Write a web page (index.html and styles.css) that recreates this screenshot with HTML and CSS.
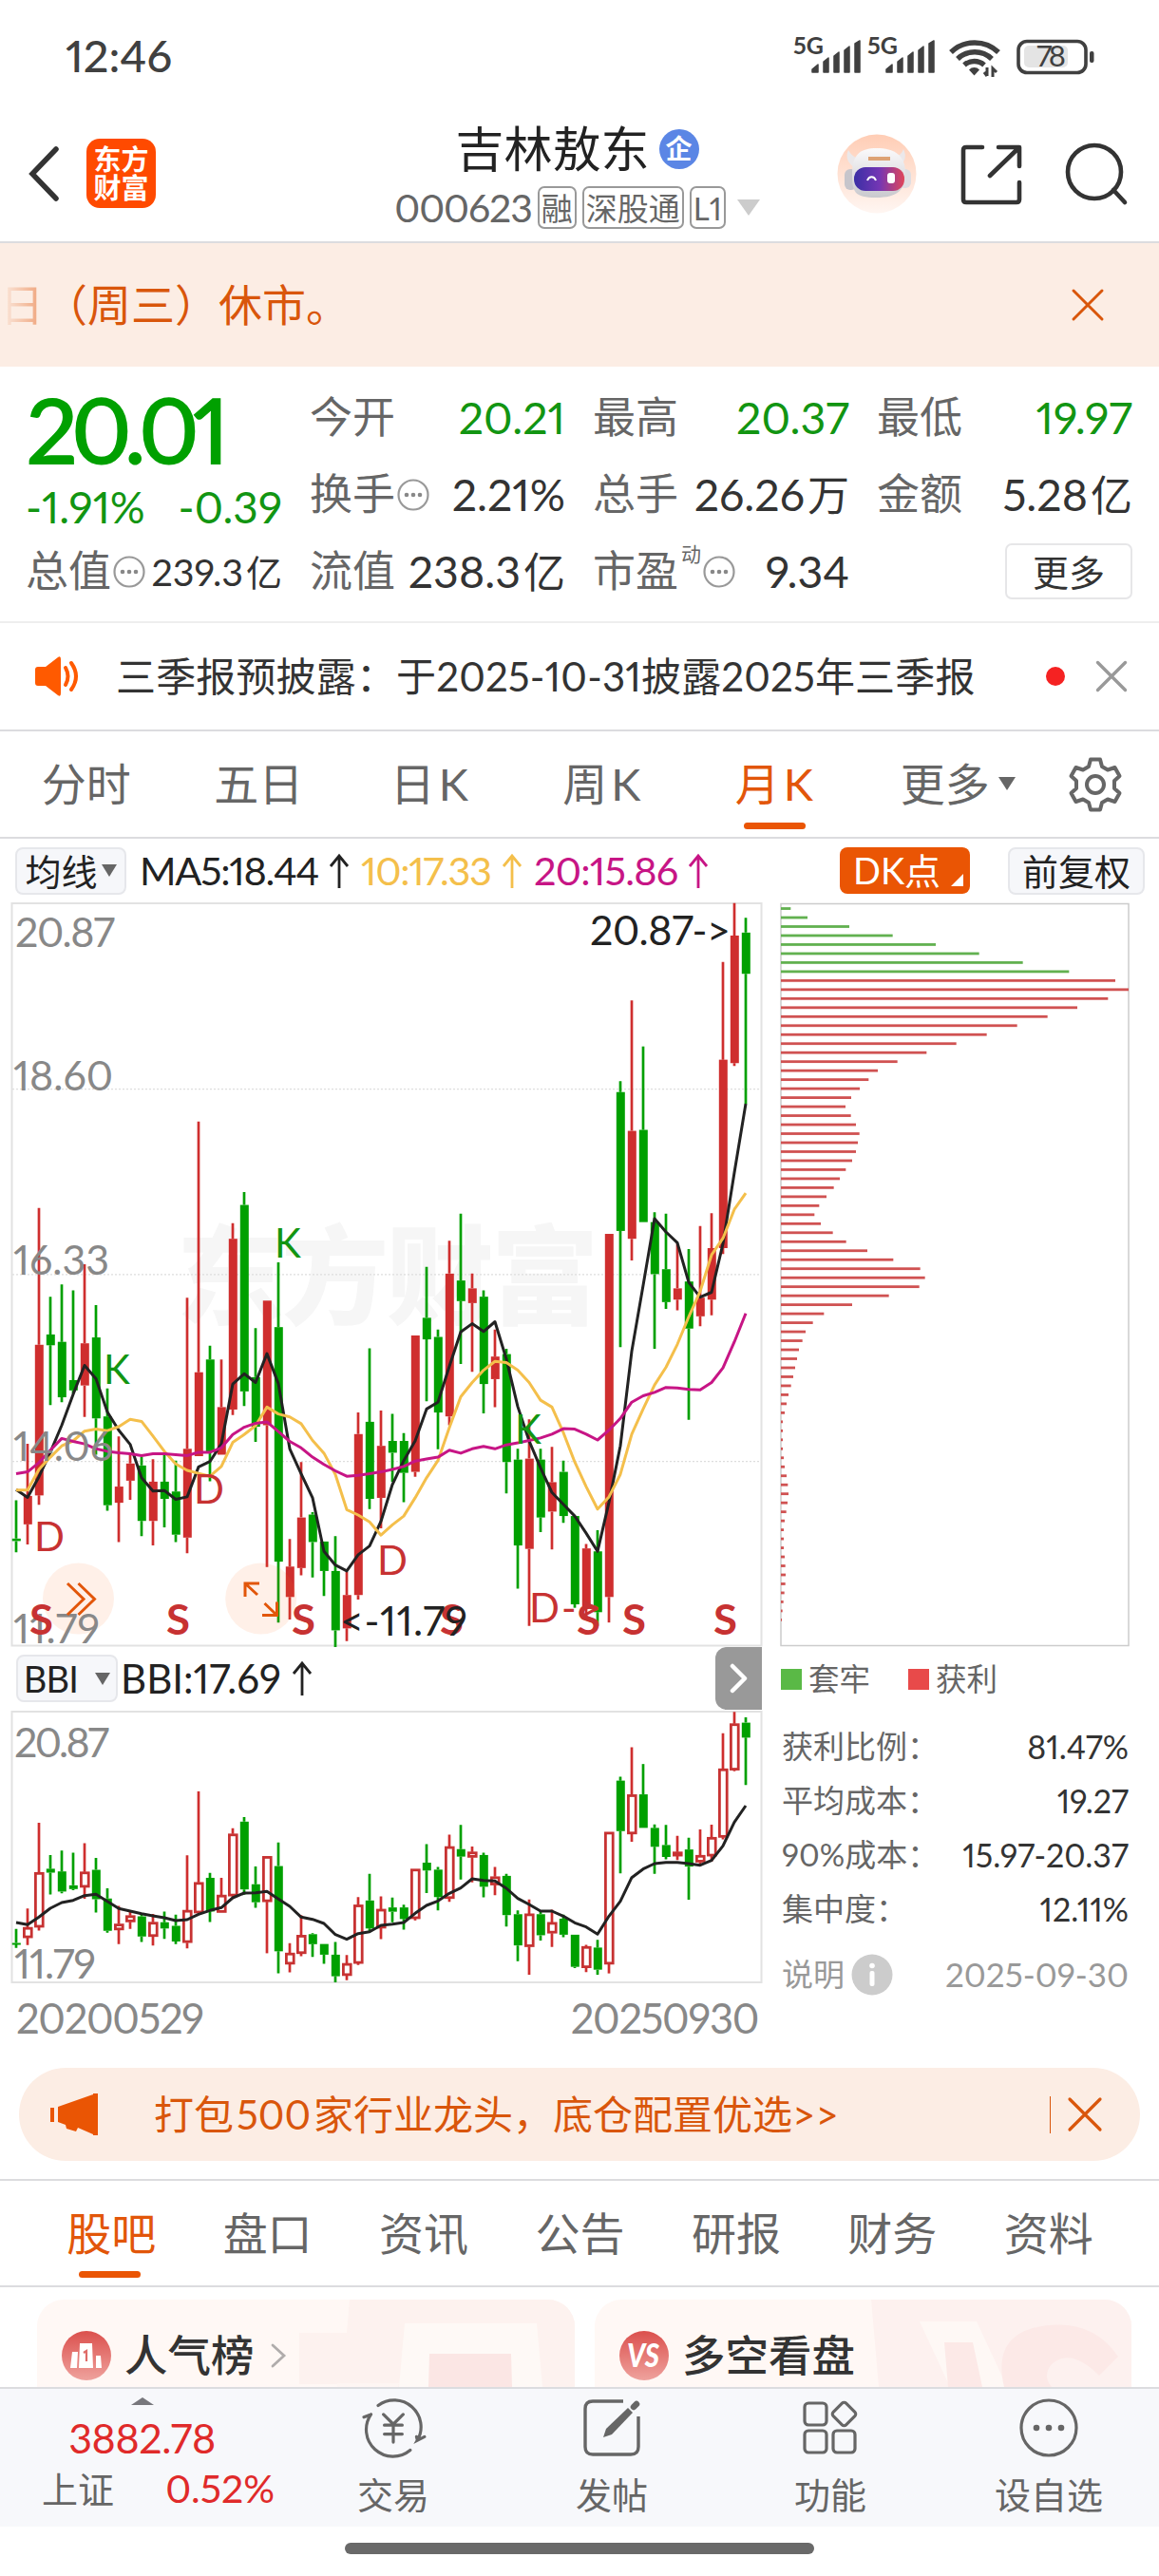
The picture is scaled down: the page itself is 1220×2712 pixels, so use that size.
FILE: index.html
```html
<!DOCTYPE html>
<html lang="zh-CN">
<head>
<meta charset="utf-8">
<title>吉林敖东 000623</title>
<link rel="stylesheet" href="styles.css">
</head>
<body>
<div class="status">
  <span class="clock">12:46</span>
  <svg class="status-icons" width="320" height="50" viewBox="834 34 320 50">
    <g fill="#404040">
      <text x="835" y="56" class="net" textLength="32">5G</text>
      <text x="913" y="56" class="net" textLength="32">5G</text>
      <g id="bars">
        <path d="M855 72l6-5v8h-6zM867 64l5-4v15h-5zM878 58l5-4v21h-5zM889 52l5-4v27h-5zM900 45l5-3v33h-5z" stroke="#404040" stroke-width="1.500" stroke-linejoin="round"/>
        <path d="M933 72l6-5v8h-6zM945 64l5-4v15h-5zM956 58l5-4v21h-5zM967 52l5-4v27h-5zM978 45l5-3v33h-5z" stroke="#404040" stroke-width="1.500" stroke-linejoin="round"/>
      </g>
      <path d="M1020 72.500a7.500 7.500 0 0 1 11 0l-5.500 6z"/>
      <path d="M1039 70v9m-3-4l3 4M1045 80v-9l4 4" fill="none" stroke="#404040" stroke-width="3"/>
    </g>
    <g fill="none" stroke="#404040" stroke-width="5.500">
      <path d="M1001 54a36 36 0 0 1 50 0"/><path d="M1008 61a26 26 0 0 1 36 0"/><path d="M1015 67.500a16 16 0 0 1 21 0"/>
    </g>
    <rect x="1072" y="42.500" width="71" height="33" rx="9" fill="none" stroke="#404040" stroke-width="3.600"/>
    <rect x="1078" y="47" width="46" height="23" rx="5" fill="#e4e4e4"/>
    <rect x="1147" y="53" width="4.500" height="12" rx="2" fill="#404040"/>
    <text x="1091" y="69" class="batt" textLength="31">78</text>
  </svg>
</div>

<header class="header">
  <div class="head-left">
    <svg width="36" height="60" viewBox="0 0 36 60"><path d="M31 4L6 30l25 26" fill="none" stroke="#333" stroke-width="5.500" stroke-linecap="round"/></svg>
    <div class="logo"><span>东方</span><span>财富</span></div>
  </div>
  <div class="head-mid">
    <div class="title"><span>吉林敖东</span><b class="qi">企</b></div>
    <div class="code"><span class="code-num">000623</span><i>融</i><i>深股通</i><i>L1</i><svg width="24" height="18" viewBox="0 0 24 18"><path d="M0 0h24L12 17z" fill="#ccc"/></svg></div>
  </div>
  <div class="head-right">
    <svg width="84" height="84" viewBox="0 0 84 84">
      <defs>
        <linearGradient id="peach" x2="0" y2="1"><stop offset="0" stop-color="#ffcdb5"/><stop offset="1" stop-color="#fff6f2"/></linearGradient>
        <linearGradient id="visor"><stop offset="0" stop-color="#3a2fa5"/><stop offset=".5" stop-color="#7436b4"/><stop offset="1" stop-color="#e0465a"/></linearGradient>
        <linearGradient id="helmet" x2="0" y2="1"><stop offset="0" stop-color="#fbfafb"/><stop offset="1" stop-color="#c9c9ce"/></linearGradient>
      </defs>
      <circle cx="42" cy="42" r="41.500" fill="url(#peach)"/>
      <path d="M12 17c-4 8 1 15 6 18l6-9c-6-1-9-4-12-9zM70 16c4 8 1 14-4 17l-7-8c6-1 9-4 11-9z" fill="#ebe8ea"/>
      <rect x="8" y="37" width="13" height="22" rx="6" fill="#c6c5cb"/><rect x="65" y="37" width="13" height="20" rx="6" fill="#dedde2"/>
      <path d="M16 42c0-20 8-27 26-27s30 7 30 26c0 18-8 26-31 26S16 61 16 42z" fill="url(#helmet)"/>
      <rect x="18" y="35" width="53" height="25" rx="12" fill="url(#visor)"/>
      <path d="M33 26h23" stroke="#dda274" stroke-width="4"/>
      <path d="M32 49c2-5 7-5 9 0" fill="none" stroke="#fff" stroke-width="2"/><rect x="53" y="41" width="8" height="11" rx="3" fill="#fff"/>
    </svg>
    <svg width="64" height="64" viewBox="0 0 64 64" fill="none" stroke="#333" stroke-width="4.600" stroke-linecap="round" stroke-linejoin="round"><path d="M23 4H6q-3 0-3 3v52q0 3 3 3h53q3 0 3-3V41M40 4h22v20M31 34L60 6"/></svg>
    <svg width="66" height="66" viewBox="0 0 66 66" fill="none" stroke="#333" stroke-width="4.600" stroke-linecap="round"><circle cx="31" cy="31" r="28"/><path d="M51 50l12 13"/></svg>
  </div>
</header>

<div class="notice">
  <span class="notice-text"><span class="fade">日</span>（周三）休市。</span>
  <svg width="34" height="34" viewBox="0 0 34 34"><path d="M2 2l30 30M32 2L2 32" stroke="#d9560b" stroke-width="3" stroke-linecap="round"/></svg>
</div>

<section class="quote">
  <div class="price-col">
    <div class="price">20.01</div>
    <div class="change"><span>-1.91%</span><span>-0.39</span></div>
  </div>
  <div class="cell"><span>今开</span><em class="green">20.21</em></div>
  <div class="cell"><span>最高</span><em class="green">20.37</em></div>
  <div class="cell"><span>最低</span><em class="green">19.97</em></div>
  <div class="cell"><span>换手</span><svg class="more-dot" viewBox="0 0 34 34"><use href="#dots"/></svg><em>2.21%</em></div>
  <div class="cell"><span>总手</span><em>26.26<u>万</u></em></div>
  <div class="cell"><span>金额</span><em>5.28<u>亿</u></em></div>
  <div class="cell"><span>总值</span><svg class="more-dot" viewBox="0 0 34 34"><g id="dots"><circle cx="17" cy="17" r="15.500" fill="none" stroke="#999" stroke-width="2.200"/><g fill="#888"><circle cx="10" cy="17" r="2.300"/><circle cx="17" cy="17" r="2.300"/><circle cx="24" cy="17" r="2.300"/></g></g></svg><em class="small">239.3<u>亿</u></em></div>
  <div class="cell"><span>流值</span><em>238.3<u>亿</u></em></div>
  <div class="cell"><span>市盈</span><sup>动</sup><svg class="more-dot" viewBox="0 0 34 34"><use href="#dots"/></svg><em>9.34</em></div>
  <div class="cell end"><button class="more">更多</button></div>
</section>

<div class="announce">
  <svg width="50" height="42" viewBox="0 0 50 42"><path d="M3 11h8L24 1q3-2 3 2v36q0 4-3 2L11 31H3q-3 0-3-3V14q0-3 3-3z" fill="#ff5a00"/><path d="M32 12q5 9 0 18M38 7q10 14 0 28" fill="none" stroke="#ff5a00" stroke-width="4" stroke-linecap="round"/></svg>
  <span class="announce-text">三季报预披露：于2025-10-31披露2025年三季报</span>
  <i class="dot"></i>
  <svg width="32" height="32" viewBox="0 0 32 32"><path d="M1.500 1.500l29 29M30.500 1.500l-29 29" stroke="#999" stroke-width="3.400" stroke-linecap="round"/></svg>
</div>

<nav class="periods">
  <span>分时</span><span>五日</span><span class="k-tab">日K</span><span class="k-tab">周K</span><span class="k-tab on">月K</span><span class="p-more">更多<svg width="18" height="15" viewBox="0 0 18 15"><path d="M0 0h18L9 14z" fill="#666"/></svg></span>
  <span><svg width="56" height="58" viewBox="-28 -29 56 58" fill="none" stroke="#666" stroke-width="4"><path stroke-linejoin="round" d="M-5-26.500H5L7-19 13-15.500 20.500-18 25.500-9 20-4V4L25.500 9 20.500 18 13 15.500 7 19 5 26.500H-5L-7 19-13 15.500-20.500 18-25.500 9-20 4V-4L-25.500-9-20.500-18-13-15.500-7-19z"/><circle r="9"/></svg></span>
</nav>

<div class="ma-bar">
  <div class="chip ma-chip">均线<svg width="16" height="13" viewBox="0 0 16 13"><path d="M0 0h16L8 13z" fill="#666"/></svg></div>
  <span class="ma ma5">MA5:18.44<svg class="up" viewBox="0 0 20 36"><use href="#up"/></svg></span>
  <span class="ma ma10">10:17.33<svg class="up" viewBox="0 0 20 36"><path id="up" d="M10 36V2M1 13L10 2l9 11" fill="none" stroke="currentColor" stroke-width="2.800"/></svg></span>
  <span class="ma ma20">20:15.86<svg class="up" viewBox="0 0 20 36"><use href="#up"/></svg></span>
  <div class="dk">DK点</div>
  <div class="chip fq">前复权</div>
</div>

<section class="charts">
  <div class="left">
    <svg id="kline" width="790" height="783" viewBox="12 950 790 783">
      <g class="watermark"><text x="186" y="1385" textLength="444">东方财富</text></g>
      <path d="M13 1146.600h788M13 1341.900h788M13 1538.700h788" stroke="#ddd" stroke-width="1.300" stroke-dasharray="2 2"/>
      <rect x="12.500" y="951" width="789" height="781.500" fill="none" stroke="#e2e2e2" stroke-width="2"/>
      <g id="k-candles"></g>
      <circle cx="82.500" cy="1683" r="37.500" fill="#ff6a20" fill-opacity=".1"/>
      <circle cx="274.700" cy="1683" r="37.500" fill="#ff6a20" fill-opacity=".1"/>
      <g id="k-lines"></g>
      <g class="axis">
        <text x="16" y="997" textLength="105">20.87</text><text x="14" y="1148" textLength="105">18.60</text>
        <text x="14" y="1342" textLength="101">16.33</text><text x="14" y="1538" textLength="105">14.06</text>
        <text x="14" y="1730" textLength="91">11.79</text>
      </g>
      <g class="mark k"><text x="109" y="1457">K</text><text x="289" y="1324">K</text><text x="542" y="1520">K</text></g>
      <g class="mark d"><text x="36" y="1633">D</text><text x="204" y="1583">D</text><text x="397" y="1657.500">D</text><text x="557" y="1708" textLength="76">D-&gt;</text></g>
      <g class="mark s"><text x="31" y="1721" textLength="25" lengthAdjust="spacingAndGlyphs">S</text><text x="175" y="1721" textLength="25" lengthAdjust="spacingAndGlyphs">S</text><text x="307" y="1721" textLength="25" lengthAdjust="spacingAndGlyphs">S</text><text x="463" y="1721" textLength="25" lengthAdjust="spacingAndGlyphs">S</text><text x="607" y="1721" textLength="25" lengthAdjust="spacingAndGlyphs">S</text><text x="655" y="1721" textLength="25" lengthAdjust="spacingAndGlyphs">S</text><text x="751" y="1721" textLength="25" lengthAdjust="spacingAndGlyphs">S</text></g>
      <g class="peak"><text x="621" y="995" textLength="148">20.87-&gt;</text><text x="358" y="1722" textLength="134">&lt;-11.79</text></g>
      <g fill="none" stroke="#e2560a" stroke-width="3">
        <path d="M71 1667l17 16.500-17 16.500M82.500 1667l17 16.500-17 16.500"/>
        <path d="M273 1667h-15v14M258 1667l13 12M276 1700.500h15.500v-14M291.500 1700.500l-13-12.500"/>
      </g>
    </svg>
    <div class="bbi-bar">
      <div class="chip bbi-chip">BBI<svg width="16" height="13" viewBox="0 0 16 13"><path d="M0 0h16L8 13z" fill="#666"/></svg></div>
      <span class="bbi">BBI:17.69<svg class="up" viewBox="0 0 20 36"><use href="#up"/></svg></span>
      <div class="handle"><svg width="20" height="32" viewBox="0 0 20 32"><path d="M3 3l13 13L3 29" fill="none" stroke="#fff" stroke-width="4.500" stroke-linecap="round" stroke-linejoin="round"/></svg></div>
    </div>
    <svg id="bbi" width="790" height="287" viewBox="12 1801 790 287">
      <rect x="12.500" y="1802" width="789" height="285" fill="none" stroke="#e2e2e2" stroke-width="2"/>
      <g id="b-candles"></g>
      <g class="axis"><text x="15" y="1850" textLength="100">20.87</text><text x="15" y="2083" textLength="86">11.79</text></g>
    </svg>
    <div class="dates"><span>20200529</span><span>20250930</span></div>
  </div>
  <div class="right">
    <svg id="chips" width="368" height="783" viewBox="821 950 368 783">
      <rect x="822" y="951.500" width="366" height="781" fill="none" stroke="#ccc" stroke-width="1.500"/>
    </svg>
    <div class="legend"><i class="sq g"></i><span>套牢</span><i class="sq r"></i><span>获利</span></div>
    <div class="stat"><span>获利比例：</span><b>81.47%</b></div>
    <div class="stat"><span>平均成本：</span><b>19.27</b></div>
    <div class="stat"><span>90%成本：</span><b>15.97-20.37</b></div>
    <div class="stat"><span>集中度：</span><b>12.11%</b></div>
    <div class="stat note"><span>说明</span><svg width="44" height="44" viewBox="0 0 44 44"><circle cx="22" cy="22" r="21.500" fill="#ccc"/><g fill="#fff"><circle cx="22" cy="12.500" r="2.800"/><rect x="19.500" y="18" width="5" height="16" rx="2"/></g></svg><b>2025-09-30</b></div>
  </div>
</section>

<div class="banner">
  <svg width="52" height="44" viewBox="0 0 52 44" fill="#ea5504"><path d="M1 15h4v15H1zM9 14L46 1V43L30 36l-2 4-10-3-1-4-8-3zM46 0h5v44h-5z"/></svg>
  <span class="banner-text">打包<span class="n500">500</span>家行业龙头，底仓配置优选&gt;&gt;</span>
  <i class="bar"></i>
  <svg width="36" height="36" viewBox="0 0 36 36"><path d="M2 2l32 32M34 2L2 34" stroke="#d9560b" stroke-width="3.200" stroke-linecap="round"/></svg>
</div>

<nav class="tabs"><span class="on">股吧</span><span>盘口</span><span>资讯</span><span>公告</span><span>研报</span><span>财务</span><span>资料</span></nav>

<section class="cards">
  <div class="card">
    <svg class="deco" width="300" height="92" viewBox="0 0 300 92"><path d="M63 0H300V92H50V89H10V35H60z" fill="#fdf2ef"/><path d="M50 88h65l-1 4H50z" fill="#fef6f3"/><path d="M121 25h139l6 67H115z" fill="#fef9f6"/><path d="M147 57h86l1 35h-88z" fill="#fbe6e4"/></svg>
    <svg width="52" height="52" viewBox="0 0 52 52"><defs><linearGradient id="rd" x2="0" y2="1"><stop offset="0" stop-color="#db504d"/><stop offset="1" stop-color="#efa29d"/></linearGradient></defs><circle cx="26" cy="26" r="26" fill="url(#rd)"/><path d="M11 22h6l-1 17H9zM19 13h13l1 26H18zM36 26h5l1 13h-6z" fill="#fff"/><path d="M23 23l3-2v11" stroke="#df6b68" stroke-width="2.200" fill="none"/></svg>
    <span>人气榜</span>
    <svg class="chev" width="18" height="26" viewBox="0 0 18 26"><path d="M3 2l12 11L3 24" fill="none" stroke="#b0acab" stroke-width="2.800" stroke-linecap="round"/></svg>
  </div>
  <div class="card">
    <svg class="deco" width="300" height="92" viewBox="0 0 300 92"><path d="M26 0H300V92H34z" fill="#fdf1ef"/><path d="M77 23h60l32 69h-60z" fill="#fef8f5"/><path d="M103 45h30l10 47h-36z" fill="#fce9e7"/><path d="M166 92q-12-50 30-62 60-14 90 30l-20 20q-30-30-50-12-10 12 0 24z" fill="#fce9e7"/></svg>
    <svg width="52" height="52" viewBox="0 0 52 52"><circle cx="26" cy="26" r="26" fill="url(#rd)"/><text x="25" y="38" class="vs" text-anchor="middle" textLength="34" lengthAdjust="spacingAndGlyphs">VS</text></svg>
    <span>多空看盘</span>
  </div>
</section>

<nav class="bottom">
  <div class="index">
    <svg width="24" height="8" viewBox="0 0 24 8"><path d="M0 8L12 0l12 8z" fill="#77777c"/></svg>
    <strong>3882.78</strong>
    <p><span>上证</span><em>0.52%</em></p>
  </div>
  <div class="item"><svg width="72" height="66" viewBox="-36 -33 72 66" fill="none" stroke="#666" stroke-width="3.400" stroke-linecap="round"><path d="M-17-25A30 30 0 0 1 27 14l8-4M27 14l-1-4M-25-15A30 30 0 0 0 19 25M-25-15l-8 3M-11-15L0-4 11-15M-10-3H10M-10 7H10M0-3V16"/></svg><span>交易</span></div>
  <div class="item"><svg width="60" height="60" viewBox="0 0 60 60" fill="none" stroke="#666" stroke-width="3.400"><path d="M42 2H10Q2 2 2 10v40q0 8 8 8h40q8 0 8-8V18"/><path d="M21 40l3-9L47 9l5 5-22 23z" fill="#666" stroke="none"/><path d="M53 8l3-3" stroke-width="6.500" stroke-linecap="round"/></svg><span>发帖</span></div>
  <div class="item"><svg width="58" height="58" viewBox="0 0 58 58" fill="none" stroke="#666" stroke-width="3.200"><rect x="2" y="3" width="23" height="23" rx="4"/><rect x="2" y="32" width="23" height="23" rx="4"/><rect x="32" y="32" width="23" height="23" rx="4"/><rect x="34" y="5" width="19" height="19" rx="3" transform="rotate(45 43.500 14.500)"/></svg><span>功能</span></div>
  <div class="item"><svg width="62" height="62" viewBox="0 0 62 62"><circle cx="31" cy="31" r="29" fill="none" stroke="#666" stroke-width="3.200"/><g fill="#666"><circle cx="18" cy="31" r="3.300"/><circle cx="31" cy="31" r="3.300"/><circle cx="44" cy="31" r="3.300"/></g></svg><span>设自选</span></div>
</nav>
<div class="home"><i></i></div>
<script src="script.js"></script>
</body>
</html>
```

FILE: styles.css
```css
* { box-sizing: border-box; }
body { margin: 0; width: 1220px; height: 2712px; overflow: hidden; background: #fff; color: #333; font-family: Lato, "Noto Sans CJK SC", sans-serif; font-feature-settings: "pnum"; line-height: 1; }
svg { display: block; flex: none; overflow: visible; }
i, em { font-style: normal; }
u { text-decoration: none; }
span, em, b, strong { white-space: nowrap; }

.status { height: 111px; padding: 6px 66px 0 69px; display: flex; align-items: center; justify-content: space-between; }
.clock { font-size: 47px; color: #404040; font-weight: 500; }
.status-icons { margin-top: 2px; }
.net { font-size: 25px; font-weight: 700; }
.batt { font-size: 31px; fill: #404040; }

.header { height: 145px; border-bottom: 2px solid #dcdcdf; display: grid; grid-template-columns: 1fr auto 1fr; align-items: center; padding: 0 33px 0 28px; }
.head-left { display: flex; align-items: center; gap: 27px; }
.logo { width: 73px; height: 73px; border-radius: 14px; background: #ff4a00; color: #fff; font-size: 29px; font-weight: 700; display: flex; flex-direction: column; align-items: center; justify-content: center; gap: 1px; }
.head-mid { display: flex; flex-direction: column; align-items: center; gap: 13px; padding-top: 7px; }
.title { height: 52px; display: flex; align-items: center; gap: 10px; font-size: 51px; color: #222; }
.qi { width: 42px; height: 42px; border-radius: 50%; background: #5b86e5; color: #fff; font-size: 28px; line-height: 41px; text-align: center; font-weight: 700; }
.code { height: 46px; display: flex; align-items: center; gap: 6px; font-size: 41px; color: #666; }
.code-num { letter-spacing: -1.1px; }
.code i { height: 45px; line-height: 42px; border: 2px solid #999; border-radius: 7px; padding: 0 2px; font-size: 33px; }
.code svg { margin-left: 6px; }
.head-right { display: flex; align-items: center; justify-content: flex-end; gap: 46px; }

.notice { height: 130px; background: #fcede4; color: #d9560b; padding: 0 58px 0 0; display: flex; align-items: center; justify-content: space-between; font-size: 46px; }
.fade { background: linear-gradient(90deg, #fcede4, #ee9f74); -webkit-background-clip: text; color: transparent; }

.quote { height: 270px; border-bottom: 2px solid #eee; padding: 13px 27px 15px; display: grid; grid-template-columns: 270px 269px 270px 269px; column-gap: 29px; grid-template-rows: repeat(3, 81px); align-items: center; }
.price-col { grid-row: span 2; align-self: stretch; color: #00a000; }
.price { font-size: 97px; line-height: 106px; font-weight: 600; letter-spacing: -7.5px; }
.change { display: flex; justify-content: space-between; font-size: 46px; line-height: 58px; color: #129512; }
.cell { display: flex; align-items: center; font-size: 45px; line-height: 81px; color: #666; }
.cell em { margin-left: auto; color: #333; font-size: 46.500px; }
.cell em.green { color: #129512; }
.cell u { margin-left: 3px; font-size: 44px; }
.cell em.small { font-size: 39.500px; }
.small u { font-size: 38px; }
.cell.end { justify-content: flex-end; }
.more-dot { width: 34px; height: 34px; margin-left: 2px; }
.cell sup { font-size: 21px; line-height: 21px; align-self: flex-start; margin: 11px 0 0 3px; }
.more { width: 134px; height: 59px; border: 2px solid #e6e6e8; border-radius: 7px; background: #fff; color: #333; font: 38px/52px Lato, "Noto Sans CJK SC", sans-serif; padding: 0; }

.announce { height: 114px; border-bottom: 2px solid #dcdcdf; padding: 0 34px 0 37px; display: flex; align-items: center; }
.announce-text { margin-left: 35px; font-size: 42px; flex: 1; letter-spacing: .15px; }
.dot { width: 20px; height: 20px; border-radius: 50%; background: #f52222; margin-right: 33px; }

.periods { height: 113px; border-bottom: 2px solid #dcdcdf; display: grid; grid-template-columns: repeat(6, 181.500px) 1fr; font-size: 47px; color: #666; }
.periods > span { height: 111px; display: flex; align-items: center; justify-content: center; position: relative; }
.periods .k-tab { letter-spacing: 4px; }
.periods .p-more { padding-left: 20px; }
.p-more svg { margin-left: 9px; }
.periods > :last-child { padding-right: 3px; }
.on { color: #e2560a !important; position: relative; }
.on::after { content: ""; position: absolute; left: 50%; margin-left: -34px; bottom: 8px; width: 65px; height: 7px; border-radius: 4px; background: #ea5504; }

.ma-bar { height: 67px; padding: 0 15px 0 16px; display: flex; align-items: center; }
.chip { height: 50px; border: 2px solid #e6e7eb; border-radius: 8px; background: #f6f7fa; color: #222; font-size: 38px; display: flex; align-items: center; justify-content: center; }
.ma-chip { width: 117px; gap: 4px; }
.ma { display: flex; align-items: center; font-size: 41.500px; letter-spacing: -1.3px; }
.up { width: 20px; height: 36px; margin-left: 12px; }
.ma5 { color: #222; margin-left: 14px; width: 233px; }
.ma10 { color: #f4bf4b; width: 182px; }
.ma20 { color: #c71585; letter-spacing: -.8px; }
.dk { margin-left: auto; width: 137px; height: 49px; border-radius: 8px; background: #ea5504; color: #fff; font-size: 38px; line-height: 49px; padding-left: 14px; position: relative; }
.dk::after { content: ""; position: absolute; right: 7px; bottom: 8px; border-left: 13px solid transparent; border-bottom: 13px solid #fff; }
.fq { width: 144px; margin-left: 40px; }

.charts { display: grid; grid-template-columns: 790px 368px; column-gap: 19px; padding-left: 12px; height: 1227px; }
.watermark { font-size: 113px; font-weight: 900; fill: #f6f6f6; }
.axis { font-size: 43px; fill: #888; }
.mark { font-size: 42px; }
.k { fill: #129512; } .d { fill: #c73232; } .s { fill: #c73232; font-weight: 700; font-size: 43px; }
.peak { font-size: 43px; fill: #222; }
.bbi-bar { height: 68px; display: flex; align-items: center; padding-left: 5px; }
.bbi-chip { width: 107px; gap: 18px; font-size: 38px; letter-spacing: -.8px; }
.bbi { display: flex; align-items: center; font-size: 42px; color: #222; margin-left: 3px; }
.handle { margin-left: auto; width: 49px; height: 66px; border-radius: 12px 0 0 12px; background: #999; display: flex; align-items: center; justify-content: center; }
.dates { display: flex; justify-content: space-between; padding: 0 4px 0 5px; font-size: 43.500px; line-height: 72px; color: #888; letter-spacing: -1.3px; }

.legend { display: flex; align-items: center; height: 70px; padding-left: 1px; font-size: 32.500px; color: #666; margin-bottom: 7px; }
.sq { width: 22px; height: 22px; margin-right: 7px; }
.sq.g { background: #5ab946; } .sq.r { background: #e84a4a; margin-left: 40px; }
.stat { display: flex; align-items: center; height: 57px; padding: 0 1px 0 2px; font-size: 33px; color: #666; }
.stat b { margin-left: auto; font-weight: 400; color: #333; font-size: 34px; }
.note { margin-top: 12px; color: #999; }
.note svg { margin-left: 7px; }
.stat.note b { color: #999; font-size: 35px; }

.banner { height: 98px; margin: 0 20px; border-radius: 49px; background: #fcede4; display: flex; align-items: center; padding: 0 40px 0 32px; color: #d9560b; font-size: 42px; line-height: 60px; }
.banner-text { margin-left: 58px; flex: 1; }
.n500 { margin: 0 3px; }
.bar { width: 1.500px; height: 39px; background: #d9560b; margin-right: 18px; }

.tabs { margin-top: 19px; height: 114px; border-top: 2px solid #dcdcdf; border-bottom: 2px solid #dcdcdf; padding: 0 34px 0 35px; display: grid; grid-template-columns: repeat(7, 1fr); font-size: 47px; color: #666; }
.tabs span { display: flex; align-items: center; justify-content: center; height: 110px; }

.cards { height: 105px; overflow: hidden; padding: 13px 29px 0 39px; display: grid; grid-template-columns: 566px 565px; column-gap: 21px; }
.card { height: 160px; border-radius: 28px; background: #fff8f5; position: relative; overflow: hidden; display: flex; align-items: flex-start; padding: 33px 0 0 26px; font-size: 45.500px; line-height: 52px; font-weight: 500; color: #333; }
.card > span { margin-left: 14px; position: relative; }
.deco { position: absolute; right: 0; top: 0; }
.chev { margin: 13px 0 0 16px; position: relative; }
.vs { font: italic 900 34px Lato, sans-serif; fill: #fff; }

.bottom { height: 147px; border-top: 2px solid #dcdcdf; background: #f7f8fb; display: grid; grid-template-columns: 299px repeat(4, 230px); color: #666; font-size: 38px; }
.index { display: flex; flex-direction: column; align-items: center; padding-top: 9px; }
.index strong { font-weight: 400; color: #e02a2a; font-size: 43px; line-height: 60px; margin-top: 5px; letter-spacing: -.4px; }
.index p { margin: -2px 0 0 34px; width: 245px; display: flex; justify-content: space-between; line-height: 50px; }
.index em { color: #e02a2a; font-size: 41px; }
.item { display: flex; flex-direction: column; align-items: center; }
.item svg { margin: 10px 0 0; height: 62px; }
.item span { margin-top: 20px; }
.home { height: 52px; display: flex; align-items: center; justify-content: center; padding-bottom: 7px; }
.home i { width: 494px; height: 12px; border-radius: 6px; background: #696969; }
```

FILE: script.js
```js
const NS = 'http://www.w3.org/2000/svg';
const RED = '#cf2e2e', GREEN = '#00a000';

// Monthly candles: direction, high, body top, body bottom, low (chart units)
const candles = `g 1238 1316 1321 1344|r 1123 1229 1287 1328|r 642 921 1228 1247|g 823 900 922 1044|g 798 915 1028 1038|g 810 993 1014 1020|r 757 918 1004 1068|g 840 906 1071 1145|g 1010 1067 1248 1259|r 1108 1210 1243 1323|r 1140 1163 1198 1237|g 1150 1167 1280 1311|r 1154 1200 1280 1330|g 1140 1200 1235 1293|g 1157 1220 1308 1323|r 825 1133 1314 1346|r 466 977 1148 1148|g 923 951 1140 1199|r 951 1048 1145 1145|r 673 705 1053 1064|g 610 636 1016 1046|g 887 987 1088 1119|r 831 831 1085 1374|g 753 885 1363 1487|r 1317 1373 1435 1481|r 1160 1273 1376 1391|g 1262 1267 1323 1395|g 1322 1322 1382 1433|g 1311 1382 1503 1537|r 1384 1431 1499 1525|r 1059 1103 1431 1440|g 928 1078 1235 1256|r 1055 1127 1233 1295|g 1062 1117 1141 1200|g 1101 1117 1182 1242|r 902 902 1180 1190|g 762 866 910 1036|g 890 905 1059 1134|r 709 776 1067 1085|g 654 790 832 960|r 776 806 836 976|g 810 823 1001 1061|r 890 945 991 1048|g 929 940 1160 1224|g 1133 1155 1330 1418|r 1073 1153 1337 1494|g 1133 1155 1273 1303|r 1129 1201 1261 1338|g 1157 1180 1270 1284|g 1270 1270 1450 1457|r 1327 1336 1455 1480|g 1299 1342 1466 1494|r 695 695 1435 1487|g 384 406 689 926|r 219 485 705 749|g 313 483 671 671|g 651 671 777 929|g 654 767 834 848|r 715 806 829 851|g 726 792 888 1074|r 679 825 863 883|r 653 724 829 861|r 141 340 724 736|r 21 87 347 353|g 51 81 165 430`
  .split('|').map(s => { const p = s.split(' '); return [p[0], ...p.slice(1).map(Number)]; });

const ma5 = [1216,1232,1190,1140,1085,1022,963,990,1058,1095,1124,1192,1219,1218,1236,1231,1170,1159,1123,1001,980,998,939,1000,1133,1184,1233,1342,1370,1382,1349,1331,1281,1206,1157,1117,1052,1038,965,895,878,894,874,950,1047,1117,1172,1222,1246,1270,1305,1342,1242,1127,934,800,664,691,713,794,824,814,715,570,430];
const ma10 = [1217,1217,1175,1150,1127,1117,1097,1093,1096,1088,1073,1077,1107,1138,1164,1177,1183,1189,1169,1120,1104,1086,1048,1062,1068,1082,1116,1142,1185,1257,1268,1282,1309,1288,1270,1233,1192,1157,1090,1027,998,973,955,957,973,998,1034,1048,1100,1160,1210,1256,1231,1185,1103,1052,1003,967,920,864,812,738,704,645,612];
const ma20 = [1184,1180,1161,1136,1112,1118,1123,1133,1138,1141,1143,1147,1143,1143,1145,1147,1140,1140,1131,1104,1089,1081,1078,1098,1118,1131,1150,1165,1178,1189,1187,1184,1180,1175,1169,1158,1154,1150,1136,1142,1133,1128,1133,1125,1121,1116,1111,1103,1092,1093,1103,1115,1095,1071,1038,1025,1018,1008,1009,1012,1013,998,968,915,857];
const bbi = [882,889,865,837,819,812,797,793,815,838,846,854,861,867,876,873,856,844,835,804,789,788,784,808,831,865,872,885,920,935,917,911,891,887,882,853,828,814,790,773,744,749,751,774,806,825,846,846,862,883,896,919,862,815,740,713,696,692,692,696,701,686,640,565,513];
// Cost distribution, top price to bottom price
const cost = [97,150,282,419,555,692,830,976,1122,1164,1099,1002,908,812,716,620,526,434,372,343,315,288,270,287,303,314,309,303,291,271,252,233,210,187,172,192,230,272,339,421,506,521,503,407,291,202,167,144,134,123,117,111,105,98,90,84,78,72,72,72,72,75,78,84,88,90,87,83,78,75,75,75,78,80,81,80,77,74,71,69];

const X = i => 17 + 12 * i;
const Y1 = v => 940 + v / 1.9358;
const Y2 = v => 1730 + (217 + (v - 21) * 854 / 1516) / 3;

function add(parent, tag, attrs) {
  const el = document.createElementNS(NS, tag);
  for (const k in attrs) el.setAttribute(k, attrs[k]);
  parent.appendChild(el);
}
function line(parent, data, y, color) {
  add(parent, 'polyline', { points: data.map((v, i) => X(i) + ',' + y(v).toFixed(1)).join(' '), fill: 'none', stroke: color, 'stroke-width': 3, 'stroke-linejoin': 'round' });
}
function draw(parent, y, hollow) {
  candles.forEach(([c, hi, top, bot, lo], i) => {
    const x = X(i), a = y(top), b = y(bot), col = c === 'r' ? RED : GREEN;
    add(parent, 'path', { d: `M${x} ${y(hi)}V${a}M${x} ${b}V${y(lo)}`, stroke: col, 'stroke-width': 2.700 });
    if (hollow && c === 'r') add(parent, 'rect', { x: x - 3.600, y: a + 1, width: 7.800, height: Math.max(b - a - 2, 1), fill: '#fff', stroke: '#c73232', 'stroke-width': 2.800 });
    else add(parent, 'rect', { x: x - 4.200, y: a, width: 9, height: Math.max(b - a, 2), fill: col });
  });
}
const $ = id => document.getElementById(id);
draw($('k-candles'), Y1, false);
line($('k-lines'), ma5, Y1, '#222');
line($('k-lines'), ma10, Y1, '#f4bf4b');
line($('k-lines'), ma20, Y1, '#c71585');
draw($('b-candles'), Y2, true);
line($('b-candles'), bbi, v => 1730 + v / 3, '#222');
cost.forEach((v, i) => add($('chips'), 'rect', { x: 822, y: Y1(32 + i * 18.35) - 1.400, width: (v - 66) / 3, height: 2.800, fill: i < 8 ? '#62b150' : '#d05252' }));
```
